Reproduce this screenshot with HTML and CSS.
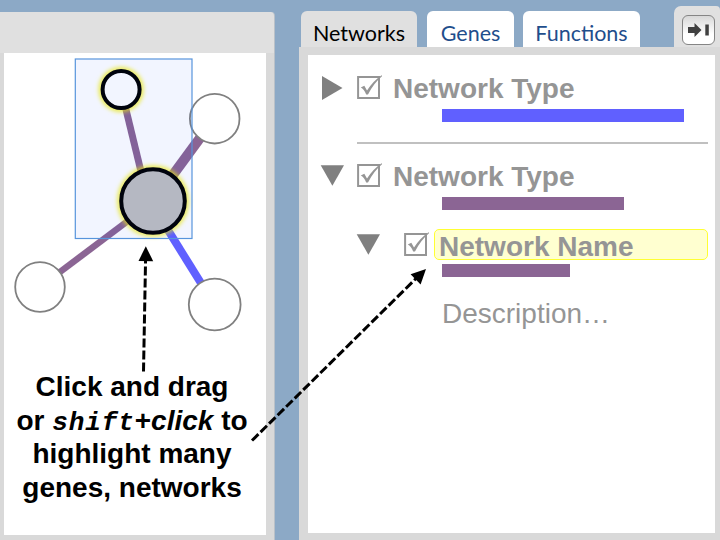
FILE: index.html
```html
<!DOCTYPE html>
<html lang="en">
<head>
<meta charset="utf-8">
<title>Networks</title>
<link rel="stylesheet" href="styles.css">
</head>
<body>
<svg class="defs" width="0" height="0">
  <symbol id="check" viewBox="0 0 26 26">
    <path d="M2.100 3.100H23V24H2.100Z" fill="none" stroke="#959595" stroke-width="2"/>
    <path d="M4.800 13.500L8.300 11.700L11 16.500Q17 7 25.600 1.200L26.200 2.200Q18 9 12 20.500H10.200Q8 15 4.800 13.500Z" fill="#959595"/>
  </symbol>
</svg>
<div class="app">
  <section class="graph-panel">
    <div class="canvas">
      <svg class="graph" width="262" height="310" viewBox="4 53 262 310">
        <defs>
          <filter id="glow" x="-30%" y="-30%" width="160%" height="160%"><feGaussianBlur stdDeviation="2.300"/></filter>
        </defs>
        <g stroke="#8b6594">
          <path d="M121 89L153 221" stroke-width="7"/>
          <path d="M214 119L153 202" stroke-width="10"/>
          <path d="M40 287L153 202" stroke-width="6.500"/>
          <path d="M214 304L153 206" stroke="#6060ff" stroke-width="8"/>
        </g>
        <g fill="#fff" stroke="#808080" stroke-width="1.800">
          <circle cx="214.700" cy="118.700" r="24.800"/>
          <circle cx="40" cy="287" r="24.800"/>
          <circle cx="214.700" cy="304.500" r="25.900"/>
        </g>
        <g fill="none" stroke="#f5f000" stroke-opacity=".75" stroke-width="5" filter="url(#glow)">
          <circle cx="121.100" cy="89.500" r="20"/>
          <circle cx="153" cy="201" r="33.300"/>
        </g>
        <g stroke="#000" stroke-width="4">
          <circle cx="121.100" cy="89.500" r="18.500" fill="#fff"/>
          <circle cx="153" cy="201" r="31.800" fill="#bfbfbf"/>
        </g>
        <rect x="75.300" y="59" width="116.700" height="179.500" fill="#0040ff" fill-opacity=".05" stroke="#5794dc" stroke-width="1.200"/>
      </svg>
      <p class="caption">Click and drag<br>or <i class="key">shift</i>+<i>click</i> to<br>highlight many<br>genes, networks</p>
    </div>
  </section>
  <section class="side">
    <nav class="tabs">
      <span class="tab active">Networks</span>
      <span class="tab genes">Genes</span>
      <span class="tab functions">Functions</span>
      <span class="collapse"><span class="collapse-button">
        <svg width="22" height="16" viewBox="0 0 22 16"><path d="M0 5H6.500V1L13.500 8L6.500 15V11H0ZM17.300 2.500H20.800V13.500H17.300Z" fill="#404040"/></svg>
      </span></span>
    </nav>
    <div class="list">
      <div class="row type">
        <svg class="toggle" width="24" height="24" viewBox="0 0 24 24"><path d="M2 0L22.500 12L2 24Z" fill="#808080"/></svg>
        <svg class="check" width="26" height="26"><use href="#check"/></svg>
        <b class="label">Network Type</b>
      </div>
      <div class="bar blue"></div>
      <hr>
      <div class="row type">
        <svg class="toggle" width="24" height="24" viewBox="0 0 24 24"><path d="M0.700 1.300H24L12.400 21.800Z" fill="#808080"/></svg>
        <svg class="check" width="26" height="26"><use href="#check"/></svg>
        <b class="label">Network Type</b>
      </div>
      <div class="bar purple"></div>
      <div class="row name">
        <svg class="toggle" width="24" height="24" viewBox="0 0 24 24"><path d="M0.700 1.300H24L12.400 21.800Z" fill="#808080"/></svg>
        <svg class="check" width="26" height="26"><use href="#check"/></svg>
        <b class="label highlighted">Network Name</b>
      </div>
      <div class="bar purple short"></div>
      <p class="description">Description…</p>
    </div>
  </section>
</div>
<svg class="arrows" width="720" height="540" viewBox="0 0 720 540">
  <path d="M143.500 371.500L145.600 258" stroke="#000" stroke-width="3" stroke-dasharray="9 3"/>
  <path d="M138.500 261L145.800 246.300L153.200 261.200Z"/>
  <path d="M252 440.500L416 278.500" stroke="#000" stroke-width="3" stroke-dasharray="9 3"/>
  <path d="M426 269L410.600 274.200L420.600 284.500Z"/>
</svg>
</body>
</html>
```

FILE: styles.css
```css
* { box-sizing: border-box; }

body {
  margin: 0;
  width: 720px;
  height: 540px;
  overflow: hidden;
  background: #8ca9c6;
  font-family: "Liberation Sans", Arial, sans-serif;
}

svg { display: block; flex: none; }
.defs { position: absolute; }

.app {
  display: flex;
  justify-content: space-between;
  height: 540px;
}

.graph-panel {
  width: 275px;
  margin-top: 12px;
  padding: 41px 9px 5px 4px;
  background: linear-gradient(#e0e0e0 41px, #d9d9d9 41px);
  border-top-right-radius: 4px;
  border-right: 1px solid #b9c1c9;
}

.canvas {
  width: 262px;
  height: 482px;
  background: #fff;
}

.caption {
  margin: 7px 3px 0 -3px;
  text-align: center;
  font-size: 28px;
  font-weight: bold;
  line-height: 33.600px;
  white-space: nowrap;
}

.key {
  font-family: "Liberation Mono", "Courier New", monospace;
  font-size: 26px;
  letter-spacing: 0.900px;
  line-height: 1;
}

.side {
  display: flex;
  flex-direction: column;
  width: 421px;
}

.tabs {
  display: flex;
  align-items: flex-end;
  height: 47px;
  padding-left: 2px;
}

.tab {
  height: 36px;
  border-radius: 6px 6px 0 0;
  background: #fff;
  color: #1f4e8c;
  font: 21.500px/44px Lato, sans-serif;
  text-align: center;
}

.active { width: 116px; background: #e0e0e0; color: #000; }
.genes { width: 87px; margin-left: 10px; }
.functions { width: 117px; margin-left: 9px; }

.collapse {
  width: 46px;
  height: 41px;
  margin-left: auto;
  padding: 9px 0 0 8px;
  border-radius: 7px 4px 0 0;
  background: #e0e0e0;
}

.collapse-button {
  display: block;
  width: 33px;
  height: 30px;
  padding: 6px 0 0 5px;
  border: 1.500px solid #858585;
  border-radius: 6px;
  background: linear-gradient(#d8d8d8, #fff 65%);
}

.list {
  flex: 1;
  margin: 0;
  padding: 14px 7px 0 12px;
  border: solid #d9d9d9;
  border-width: 8px 5px 7px 9px;
  background: #fff;
}

.row {
  display: flex;
  align-items: center;
  height: 40px;
}

.toggle { margin-top: -3px; }
.check { margin: -4px 0 0 12px; }

.label {
  margin-left: 11px;
  color: #959595;
  font-size: 28px;
  line-height: 40px;
  white-space: nowrap;
}

.bar {
  width: 242px;
  height: 13px;
  margin-left: 122px;
  background: #6060ff;
}

.bar.purple { width: 182px; background: #8b6594; }
.bar.short { width: 128px; }

hr {
  height: 2px;
  margin: 20px 0 13px 37px;
  border: 0;
  background: #c0c0c0;
}

.name {
  height: 31px;
  margin: 19px 0 4px 36px;
}

.name .toggle { margin-top: 0; }
.name .check { margin-left: 23px; margin-top: -1px; }

.highlighted {
  flex: 1;
  height: 31px;
  margin: 0 0 0 5px;
  padding-left: 4px;
  border: 1.500px solid #ffff33;
  border-radius: 5px;
  background: #ffffd0;
  line-height: 33px;
}

.description {
  margin: 21px 0 0 122px;
  color: #959595;
  font-size: 28px;
  line-height: 32px;
}

.arrows {
  position: absolute;
  inset: 0;
  pointer-events: none;
}
```
